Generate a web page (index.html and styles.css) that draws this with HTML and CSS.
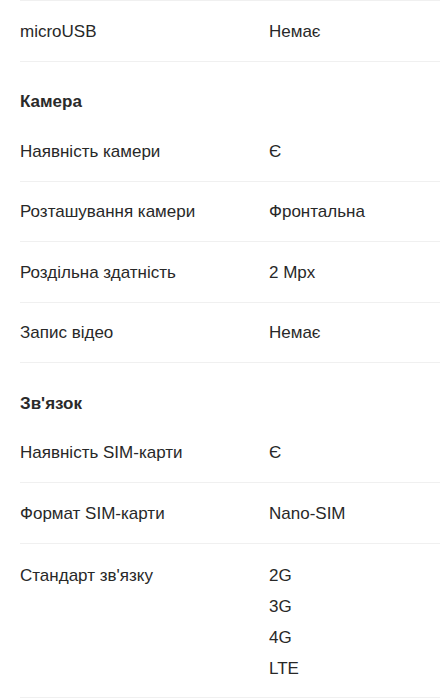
FILE: index.html
```html
<!DOCTYPE html>
<html lang="uk">
<head>
    <meta charset="UTF-8">
    <meta name="viewport" content="width=device-width, initial-scale=1.0">
    <title>Характеристики</title>
    <link rel="stylesheet" href="styles.css">
</head>
<body>
    <div class="specs">
        <div class="spec-row first">
            <div class="spec-name">microUSB</div>
            <div class="spec-value">Немає</div>
        </div>

        <h3 class="spec-group">Камера</h3>
        <div class="spec-row">
            <div class="spec-name">Наявність камери</div>
            <div class="spec-value">Є</div>
        </div>
        <div class="spec-row">
            <div class="spec-name">Розташування камери</div>
            <div class="spec-value">Фронтальна</div>
        </div>
        <div class="spec-row">
            <div class="spec-name">Роздільна здатність</div>
            <div class="spec-value">2 Mpx</div>
        </div>
        <div class="spec-row">
            <div class="spec-name">Запис відео</div>
            <div class="spec-value">Немає</div>
        </div>

        <h3 class="spec-group">Зв'язок</h3>
        <div class="spec-row">
            <div class="spec-name">Наявність SIM-карти</div>
            <div class="spec-value">Є</div>
        </div>
        <div class="spec-row">
            <div class="spec-name">Формат SIM-карти</div>
            <div class="spec-value">Nano-SIM</div>
        </div>
        <div class="spec-row multi">
            <div class="spec-name">Стандарт зв'язку</div>
            <ul class="spec-value spec-list">
                <li>2G</li>
                <li>3G</li>
                <li>4G</li>
                <li>LTE</li>
            </ul>
        </div>
    </div>
</body>
</html>
```

FILE: styles.css
```css
body {
    margin: 0;
    padding: 0;
    background: white;
    font-family: 'Liberation Sans', Arial, sans-serif;
    font-size: 17px;
    color: #282828;
}

.specs {
    padding-left: 20px;
}

.spec-row {
    display: grid;
    grid-template-columns: 249px 1fr;
    padding: 19.25px 0;
    line-height: 21px;
    border-bottom: 1px solid #f0f0f0;
}

.spec-row.first {
    border-top: 1px solid #f0f0f0;
    padding-top: 19.5px;
}

.spec-group {
    margin: 0;
    padding: 29.5px 0 9px;
    font-size: 17px;
    line-height: 21px;
    font-weight: bold;
    color: #2a2a2a;
}

.spec-row.multi {
    padding: 16.5px 0 13px;
    line-height: 31px;
}

.spec-list {
    margin: 0;
    padding: 0;
    list-style: none;
}
```
